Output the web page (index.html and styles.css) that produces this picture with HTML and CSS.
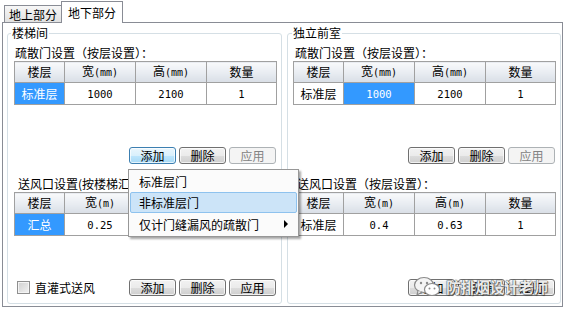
FILE: index.html
```html
<!DOCTYPE html>
<html lang="zh-CN">
<head>
<meta charset="utf-8">
<title>地下部分</title>
<link rel="stylesheet" href="styles.css">
</head>
<body>
<div class="tabs">
  <div class="tab">地上部分</div>
  <div class="tab active">地下部分</div>
</div>
<div class="panel">
  <fieldset class="group g-left">
    <legend>楼梯间</legend>
    <div class="inner">
      <div class="sub">疏散门设置（按层设置）：</div>
      <div class="grid">
        <table>
          <colgroup><col class="c1"><col class="c2"><col class="c3"><col></colgroup>
          <tr><th>楼层</th><th>宽<span class="u">(mm)</span></th><th>高<span class="u">(mm)</span></th><th>数量</th></tr>
          <tr><td class="sel">标准层</td><td class="n">1000</td><td class="n">2100</td><td class="n">1</td></tr>
        </table>
      </div>
      <div class="btns">
        <button class="btn hot">添加</button><button class="btn">删除</button><button class="btn" disabled>应用</button>
      </div>
      <div class="sub sub2">送风口设置(按楼梯汇总设置)：</div>
      <div class="grid grid2">
        <table>
          <colgroup><col class="c1"><col class="c2"><col class="c3"><col></colgroup>
          <tr><th>楼层</th><th>宽<span class="u">(m)</span></th><th>高<span class="u">(m)</span></th><th>数量</th></tr>
          <tr><td class="sel">汇总</td><td class="n">0.25</td><td class="n">0.63</td><td class="n">1</td></tr>
        </table>
      </div>
      <div class="bottom">
        <label class="check"><span class="box"></span>直灌式送风</label>
        <div class="btns-inline">
          <button class="btn">添加</button><button class="btn">删除</button><button class="btn">应用</button>
        </div>
      </div>
    </div>
  </fieldset>
  <fieldset class="group g-right">
    <legend>独立前室</legend>
    <div class="inner">
      <div class="sub">疏散门设置（按层设置）：</div>
      <div class="grid">
        <table>
          <colgroup><col class="c1"><col class="c2"><col class="c3"><col></colgroup>
          <tr><th>楼层</th><th>宽<span class="u">(mm)</span></th><th>高<span class="u">(mm)</span></th><th>数量</th></tr>
          <tr><td>标准层</td><td class="n sel">1000</td><td class="n">2100</td><td class="n">1</td></tr>
        </table>
      </div>
      <div class="btns">
        <button class="btn">添加</button><button class="btn">删除</button><button class="btn" disabled>应用</button>
      </div>
      <div class="sub sub2">送风口设置（按层设置）：</div>
      <div class="grid grid2">
        <table>
          <colgroup><col class="c1"><col class="c2"><col class="c3"><col></colgroup>
          <tr><th>楼层</th><th>宽<span class="u">(m)</span></th><th>高<span class="u">(m)</span></th><th>数量</th></tr>
          <tr><td>标准层</td><td class="n">0.4</td><td class="n">0.63</td><td class="n">1</td></tr>
        </table>
      </div>
      <div class="bottom end">
        <div class="btns-inline">
          <button class="btn">添加</button><button class="btn">删除</button><button class="btn">应用</button>
        </div>
      </div>
    </div>
  </fieldset>
</div>

<div class="menu">
  <div class="mi">标准层门</div>
  <div class="mi hot">非标准层门</div>
  <div class="mi last"><span>仅计门缝漏风的疏散门</span><span class="arrow"></span></div>
</div>

<div class="watermark">
  <svg class="wx" width="28" height="22" viewBox="0 0 28 22">
    <ellipse cx="11" cy="9" rx="9.5" ry="7.5" fill="#f4f4f4" stroke="#8a8a8a" stroke-width="1.2"/>
    <path d="M5 15 L4 19 L9 16" fill="#f4f4f4" stroke="#8a8a8a" stroke-width="1.2" stroke-linejoin="round"/>
    <ellipse cx="19" cy="13.5" rx="7.5" ry="6" fill="#ffffff" stroke="#8a8a8a" stroke-width="1.2"/>
    <circle cx="8" cy="7" r="1.2" fill="#8a8a8a"/>
    <circle cx="14" cy="7" r="1.2" fill="#8a8a8a"/>
    <circle cx="16.5" cy="12.5" r="1" fill="#8a8a8a"/>
    <circle cx="21.5" cy="12.5" r="1" fill="#8a8a8a"/>
  </svg>
  <span class="wm-text">防排烟设计老师</span>
</div>
</body>
</html>
```

FILE: styles.css
```css
* { box-sizing: border-box; }
html, body { margin: 0; padding: 0; }
body {
  width: 564px;
  height: 314px;
  background: #ffffff;
  color: #000000;
  font: 12px/14px "Noto Sans CJK SC", "Noto Sans", sans-serif;
  overflow: hidden;
  position: relative;
}

/* tabs */
.tabs {
  display: flex;
  align-items: flex-end;
  height: 22px;
  padding-left: 4px;
  position: relative;
  z-index: 2;
}
.tab {
  height: 17px;
  padding: 1px 4px 0 4px;
  line-height: 15px;
  border: 1px solid #898c95;
  border-bottom: none;
  background: linear-gradient(#f7f7f7, #e1e1e1);
  white-space: nowrap;
}
.tab.active {
  height: 22px;
  margin-bottom: -1px;
  margin-left: -1px;
  padding: 3px 6px 0 6px;
  line-height: 15px;
  background: #ffffff;
}

/* main panel */
.panel {
  margin-left: 2px;
  width: 561px;
  height: 285px;
  border: 1px solid #898c95;
  padding: 3px 1px 2px 4px;
  display: flex;
  gap: 5px;
}
.group {
  margin: 0;
  padding: 6px 4px 6px 6px;
  border: 1px solid #d5dfe5;
  border-radius: 3px;
  min-width: 0;
}
.g-left { width: 275px; }
.g-right { width: 274px; padding-left: 5px; }
legend {
  padding: 0 1px;
  margin-left: -3px;
  line-height: 14px;
}
.g-right legend { margin-left: -1px; }

.inner {
  display: flex;
  flex-direction: column;
}
.sub {
  height: 15px;
  line-height: 14px;
  padding-left: 1px;
  white-space: nowrap;
}
.g-right .sub { padding-left: 2px; }
.sub2 { margin-top: 13px; padding-left: 4px; }
.g-right .sub2 { padding-left: 4px; }

.grid { height: 86px; }
.grid2 { height: 87px; }

table {
  width: 100%;
  border-collapse: collapse;
  table-layout: fixed;
}
col.c1 { width: 50px; }
col.c2 { width: 71px; }
col.c3 { width: 71px; }
th, td {
  border: 1px solid #a0a0a0;
  padding: 0;
  text-align: center;
  font-weight: normal;
  white-space: nowrap;
}
th {
  height: 21px;
  background: linear-gradient(#f8f9fb, #e9edf2 50%, #d9dee6);
}
td {
  height: 22px;
  background: #ffffff;
}
td.sel {
  background: #3399ff;
  color: #ffffff;
}
.n {
  font-family: "DejaVu Sans Mono", "Liberation Mono", monospace;
  font-size: 10.5px;
}
.u {
  font-family: "DejaVu Sans Mono", "Liberation Mono", monospace;
  font-size: 10px;
}

/* buttons */
.btns, .btns-inline {
  display: flex;
  justify-content: flex-end;
  gap: 3px;
}
.btns { height: 17px; margin-right: 1px; }
.btn {
  width: 47px;
  height: 17px;
  margin: 0;
  padding: 0;
  font: 12px/14px "Noto Sans CJK SC", "Noto Sans", sans-serif;
  color: #000000;
  border: 1px solid #707070;
  border-radius: 3px;
  background: linear-gradient(#f2f2f2 0%, #ebebeb 50%, #dddddd 51%, #cfcfcf 100%);
  box-shadow: inset 0 0 0 1px rgba(255,255,255,0.7);
}
.btn.hot {
  border-color: #3c7fb1;
  background: linear-gradient(#eaf6fd 0%, #d9f0fc 50%, #bee6fd 51%, #a7d9f5 100%);
}
.btn:disabled {
  color: #838383;
  border-color: #adb2b5;
  background: #f4f4f4;
  box-shadow: none;
}

.bottom {
  height: 17px;
  display: flex;
  align-items: center;
  justify-content: space-between;
  margin-right: 1px;
}
.bottom.end { justify-content: flex-end; }
.check {
  display: flex;
  align-items: center;
  gap: 5px;
  margin-left: 3px;
}
.box {
  width: 13px;
  height: 13px;
  border: 1px solid #8f8f8f;
  background: linear-gradient(135deg, #cfcfcf, #f2f2f2);
  box-shadow: inset 0 0 0 1px #f4f4f4;
}

/* context menu (overlay) */
.menu {
  position: absolute;
  left: 128px;
  top: 169px;
  width: 171px;
  padding: 1px 1px;
  background: #fbfbfb;
  border: 1px solid #979797;
  box-shadow: 2px 2px 2px rgba(0,0,0,0.35);
  z-index: 5;
}
.mi {
  height: 21px;
  line-height: 19px;
  padding: 0 8px 0 8px;
  border: 1px solid transparent;
  border-radius: 2px;
  display: flex;
  align-items: center;
  justify-content: space-between;
  white-space: nowrap;
}
.mi.last { height: 22px; }
.mi.hot {
  background: #cce4f8;
  border-color: #8ec2ee;
}
.arrow {
  width: 0;
  height: 0;
  border-top: 4px solid transparent;
  border-bottom: 4px solid transparent;
  border-left: 4px solid #000000;
}

/* watermark (overlay) */
.watermark {
  position: absolute;
  left: 413px;
  top: 276px;
  display: flex;
  align-items: center;
  gap: 5px;
  z-index: 6;
}
.wm-text {
  font: bold 15px/20px "Noto Sans CJK SC", sans-serif;
  color: rgba(255,255,255,0.92);
  text-shadow: 0 0 1px #333, 0 0 1px #333, 1px 1px 1px rgba(0,0,0,0.4);
  letter-spacing: -0.5px;
}
```
